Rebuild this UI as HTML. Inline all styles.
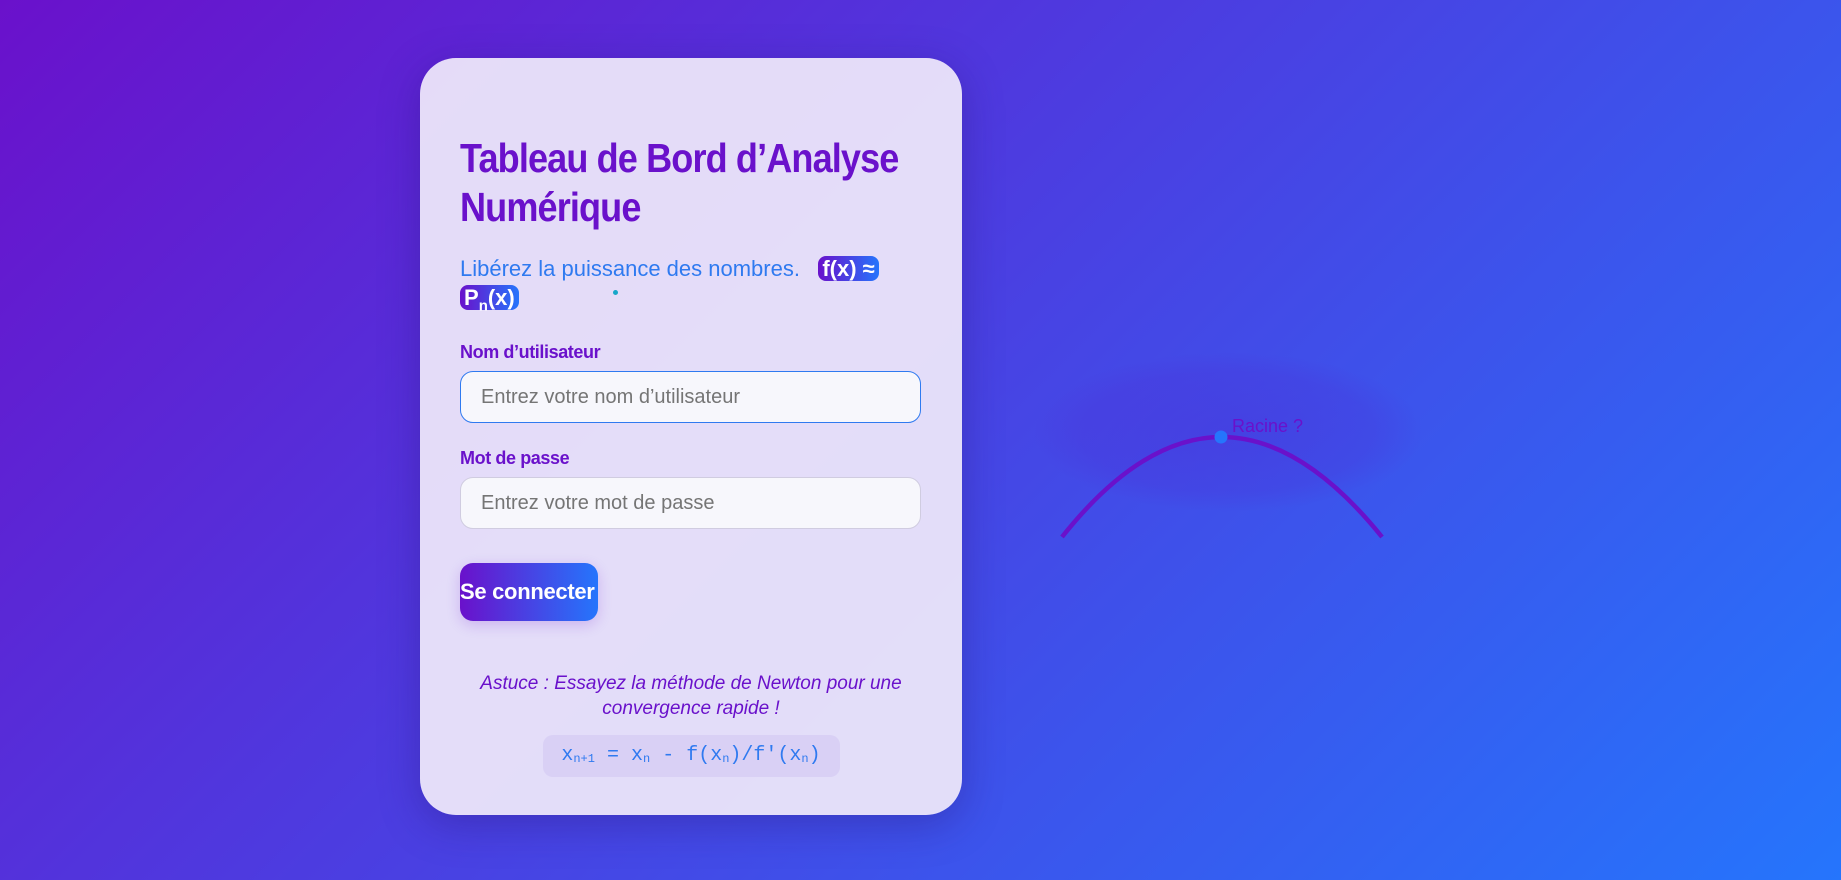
<!DOCTYPE html>
<html><head><meta charset="utf-8"><style>
*{box-sizing:border-box;margin:0;padding:0}
html,body{width:1841px;height:880px;overflow:hidden}
body{background:linear-gradient(135deg,#6a11cb 0%,#2575fc 100%);font-family:"Liberation Sans",sans-serif;position:relative}
.card{position:absolute;left:420px;top:58px;width:542px;height:757px;border-radius:36px;background:rgba(236,230,250,0.95);box-shadow:0 10px 40px rgba(40,20,120,0.35);padding:76px 40px 0 40px}
h1{font-size:41px;line-height:49px;color:#6a11cb;font-weight:bold;letter-spacing:-1px;white-space:nowrap;transform:scaleX(0.88);transform-origin:left}
.sub{margin-top:22px;font-size:22px;line-height:29px;color:#2f7af0}
.badge{background:linear-gradient(90deg,#6a11cb,#2575fc);color:#fff;font-weight:bold;border-radius:8px;padding:0 4px;-webkit-box-decoration-break:clone;box-decoration-break:clone}
.dot{position:absolute;left:193px;top:232px;width:5px;height:5px;border-radius:50%;background:#17a7c9}
label{display:block;font-size:18px;font-weight:bold;color:#6a11cb;letter-spacing:-0.4px}
.l1{margin-top:22px}
.inp{margin-top:8px;width:461px;height:52px;border-radius:13px;background:#f7f7fc;border:1px solid #d0cce0;font-size:20px;color:#757575;padding:14px 20px;line-height:22px}
.inp.f{border-color:#2f7af0}
.l2{margin-top:25px}
.btn{margin-top:34px;width:138px;height:58px;border-radius:13px;background:linear-gradient(90deg,#6a11cb,#2575fc);color:#fff;font-size:22px;font-weight:bold;line-height:58px;white-space:nowrap;letter-spacing:-0.3px;box-shadow:0 4px 14px rgba(106,17,203,0.2)}
.tip{margin-top:50px;text-align:center;font-style:italic;font-size:19px;line-height:25px;color:#6a11cb}
.form{margin:14px auto 0;width:297px;height:42px;border-radius:10px;background:#d9d0f5;color:#2f7af0;font-family:"Liberation Mono",monospace;font-size:20px;line-height:42px;text-align:center}
.form sub{font-size:12px;vertical-align:-2px}
</style></head><body>
<svg style="position:absolute;left:0;top:0" width="1841" height="880">
<defs><radialGradient id="g"><stop offset="0" stop-color="#5020d0" stop-opacity="0.28"/><stop offset="0.75" stop-color="#5020d0" stop-opacity="0.18"/><stop offset="1" stop-color="#5020d0" stop-opacity="0"/></radialGradient></defs>
<ellipse cx="1228" cy="432" rx="195" ry="80" fill="url(#g)"/>
<path d="M1062 537 Q1221 337 1382 537" fill="none" stroke="#6a11cb" stroke-width="4.5"/>
<circle cx="1221" cy="437" r="6.5" fill="#2575fc"/>
<text x="1232" y="432" font-family="Liberation Sans" font-size="18" fill="#6a11cb">Racine ?</text>
</svg>
<div class="card">
<h1>Tableau de Bord d’Analyse<br>Numérique</h1>
<div class="sub">Libérez la puissance des nombres. &nbsp;&nbsp;<span class="badge">f(x) ≈<br>P<sub style="font-size:15px">n</sub>(x)</span></div>
<span class="dot"></span>
<label class="l1">Nom d’utilisateur</label>
<div class="inp f">Entrez votre nom d’utilisateur</div>
<label class="l2">Mot de passe</label>
<div class="inp">Entrez votre mot de passe</div>
<div class="btn">Se connecter</div>
<div class="tip">Astuce : Essayez la méthode de Newton pour une convergence rapide !</div>
<div class="form">x<sub>n+1</sub> = x<sub>n</sub> - f(x<sub>n</sub>)/f'(x<sub>n</sub>)</div>
</div>
</body></html>
